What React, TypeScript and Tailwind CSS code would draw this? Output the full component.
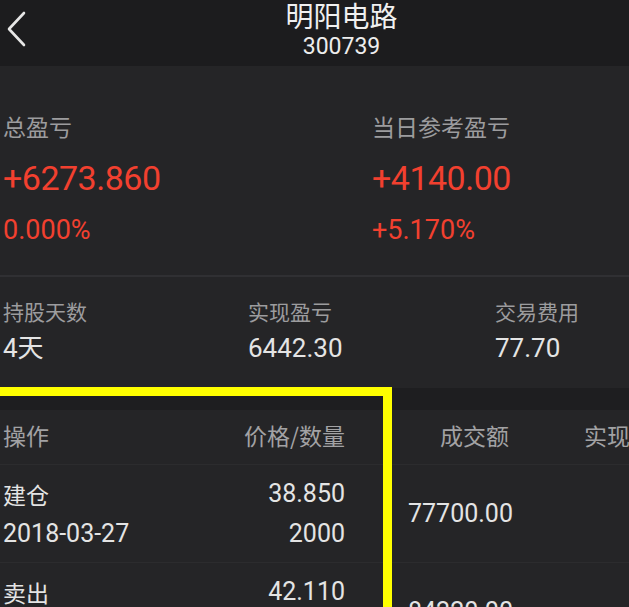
import React from 'react'

const cjk = "font-['Noto_Sans_CJK_SC',sans-serif]"
const num = "font-['Roboto','Noto_Sans_CJK_SC',sans-serif]"

const trades = [
  { op: '建仓', date: '2018-03-27', price: '38.850', qty: '2000', amount: '77700.00' },
  { op: '卖出', date: '2018-03-30', price: '42.110', qty: '2000', amount: '84220.00' },
]

export default function App() {
  return (
    <div className={`relative w-[629px] h-[607px] overflow-hidden bg-[#252527] ${cjk}`}>
      {/* Header */}
      <div className="relative h-[66px] bg-[#1c1c1e] flex flex-col items-center pl-[54px]">
        <svg className="absolute left-[6px] top-[11px]" width="22" height="36" viewBox="0 0 22 36" fill="none">
          <path d="M18 2 L3 18 L18 34" stroke="#e6e6e6" strokeWidth="2.6" strokeLinecap="round" strokeLinejoin="round" />
        </svg>
        <div className="text-[28px] leading-[30px] text-[#f0f0f0]">明阳电路</div>
        <div className={`mt-[4px] text-[23px] leading-[26px] text-[#ededed] ${num}`}>300739</div>
      </div>

      {/* Profit summary */}
      <div className="grid grid-cols-[369px_1fr] pl-[3px] pt-[44px] h-[209px]">
        {[
          ['总盈亏', '+6273.860', '0.000%'],
          ['当日参考盈亏', '+4140.00', '+5.170%'],
        ].map(([label, value, pct]) => (
          <div key={label} className="flex flex-col">
            <div className="text-[23px] leading-[32px] text-[#9c9c9e]">{label}</div>
            <div className={`mt-[16px] text-[34px] leading-[40px] tracking-[-0.5px] text-[#f2402f] ${num}`}>{value}</div>
            <div className={`mt-[16px] text-[27px] leading-[32px] text-[#f2402f] ${num}`}>{pct}</div>
          </div>
        ))}
      </div>
      <div className="h-[2px] bg-[#303033]" />

      {/* Holding stats */}
      <div className="grid grid-cols-[245px_247px_1fr] pl-[3px] pt-[21px] h-[111px]">
        {[
          ['持股天数', '4天'],
          ['实现盈亏', '6442.30'],
          ['交易费用', '77.70'],
        ].map(([label, value]) => (
          <div key={label} className="flex flex-col">
            <div className="text-[21px] leading-[26px] text-[#9c9c9e]">{label}</div>
            <div className={`mt-[8px] text-[26px] leading-[32px] text-[#e4e4e4] ${num}`}>{value}</div>
          </div>
        ))}
      </div>

      {/* Trades table */}
      <div className="h-[22px] bg-[#1e1e20]" />
      <div className="grid grid-cols-[345px_63px_176px_1fr] h-[55px] items-center pb-[4px] border-b border-[#2c2c2e] text-[23px] leading-[30px] text-[#a2a2a4] whitespace-nowrap">
        <div className="flex justify-between pl-[3px]">
          <span>操作</span>
          <span>价格/数量</span>
        </div>
        <div />
        <div className="pl-[32px]">成交额</div>
        <div className="overflow-hidden">实现盈亏</div>
      </div>
      {trades.map((t) => (
        <div key={t.op} className="grid grid-cols-[345px_63px_1fr] h-[98px] items-center border-b border-[#2c2c2e] text-[#e4e4e4]">
          <div className="flex justify-between pl-[3px]">
            <div className="flex flex-col gap-[10px]">
              <span className="text-[23px] leading-[30px]">{t.op}</span>
              <span className={`text-[25px] leading-[30px] ${num}`}>{t.date}</span>
            </div>
            <div className={`flex flex-col items-end gap-[10px] text-[25px] leading-[30px] ${num}`}>
              <span>{t.price}</span>
              <span>{t.qty}</span>
            </div>
          </div>
          <div />
          <div className={`text-[25px] leading-[30px] ${num}`}>{t.amount}</div>
        </div>
      ))}

      {/* Annotation highlight */}
      <div className="pointer-events-none absolute left-[-10px] top-[387px] w-[402px] h-[260px] border-t-[9px] border-r-[9px] border-[#ffff00]" />
    </div>
  )
}
